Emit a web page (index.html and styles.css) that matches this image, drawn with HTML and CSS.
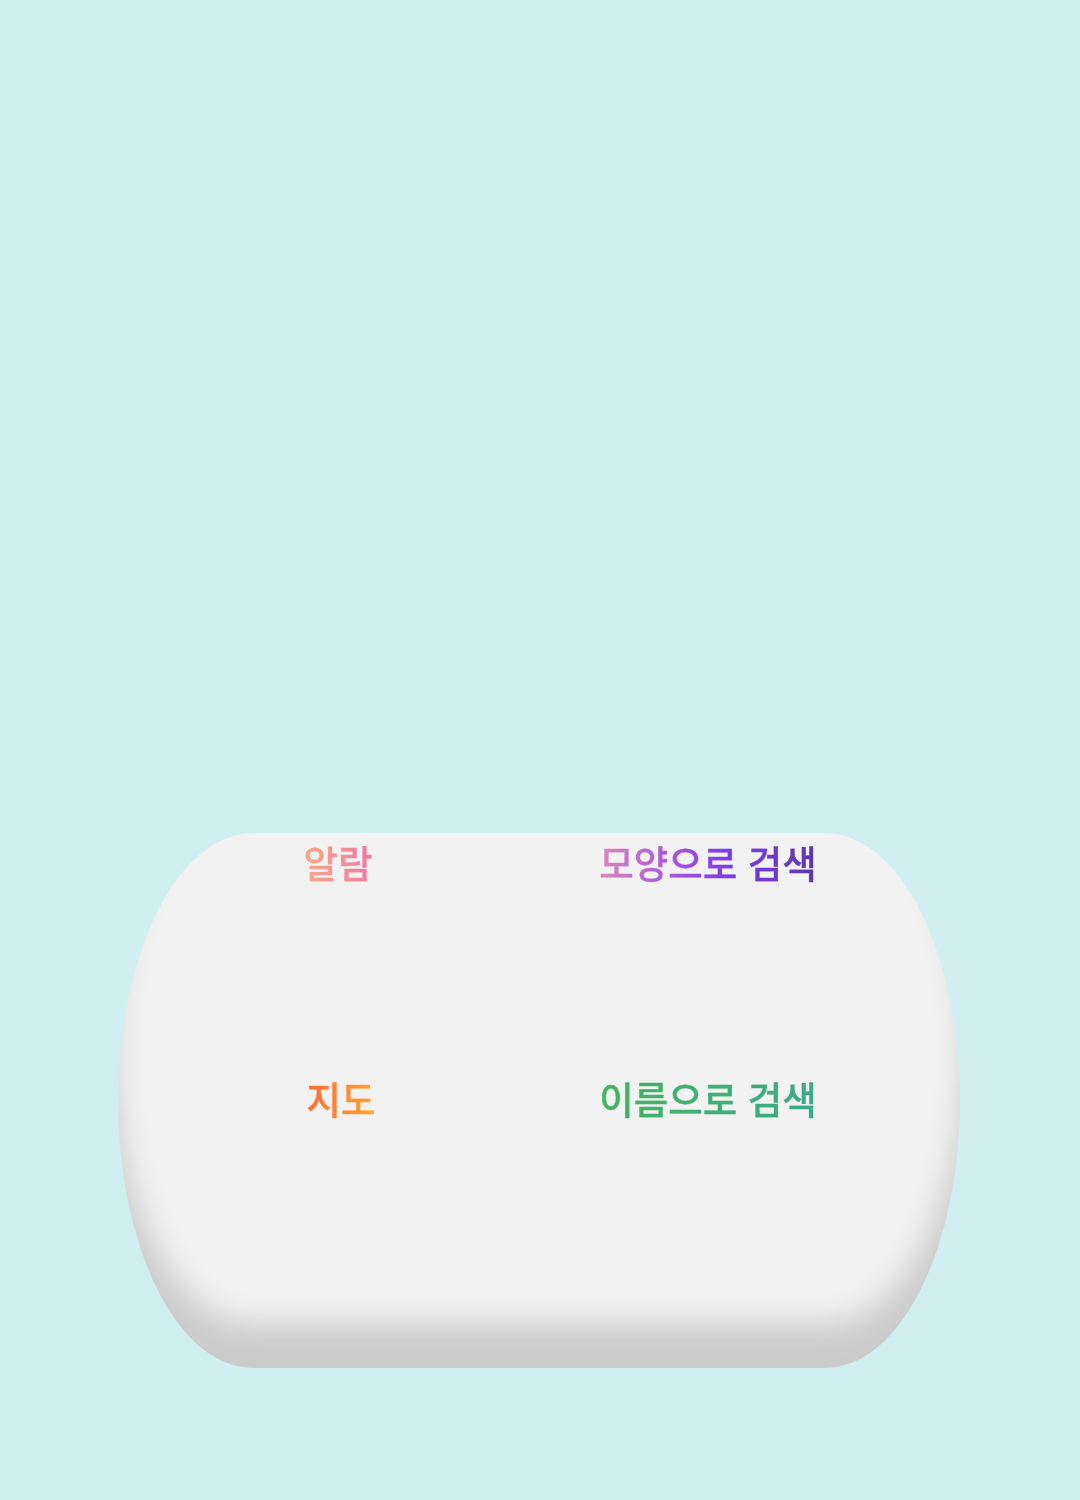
FILE: index.html
```html
<!DOCTYPE html>
<html lang="ko">
<head>
<meta charset="utf-8">
<title>메뉴</title>
<link rel="stylesheet" href="styles.css">
</head>
<body>
<main class="screen">
  <nav class="menu-card">
    <div class="menu-item"><span class="label label-alarm">알람</span></div>
    <div class="menu-item"><span class="label label-shape">모양으로 검색</span></div>
    <div class="menu-item item-map"><span class="label label-map">지도</span></div>
    <div class="menu-item"><span class="label label-name">이름으로 검색</span></div>
  </nav>
</main>
</body>
</html>
```

FILE: styles.css
```css
html, body {
  margin: 0;
  padding: 0;
  background: #d1eef0;
}
.screen {
  width: 1080px;
  height: 1500px;
  display: flex;
  flex-direction: column;
  align-items: flex-start;
  padding-top: 833px;
  padding-left: 118px;
  box-sizing: border-box;
}
.menu-card {
  width: 842px;
  height: 535px;
  box-sizing: border-box;
  background: #f2f2f2;
  border-radius: 16% / 50%;
  box-shadow: inset 0 -48px 30px -4px rgba(0, 0, 0, 0.16);
  display: grid;
  grid-template-columns: 300px 300px;
  grid-template-rows: 236px 236px;
  column-gap: 70px;
  padding-left: 70px;
}
.menu-item {
  display: flex;
  justify-content: center;
  align-items: flex-start;
}
.item-map {
  padding-left: 6px;
}
.label {
  font-family: "Noto Sans CJK KR", "Noto Sans", sans-serif;
  font-size: 37.5px;
  font-weight: 500;
  line-height: 58px;
  white-space: nowrap;
  -webkit-background-clip: text;
  background-clip: text;
  color: transparent;
  -webkit-text-stroke: 0.4px transparent;
}
.label-alarm {
  background-image: linear-gradient(90deg, #f8a988, #ef78a2);
}
.label-shape {
  background-image: linear-gradient(90deg, #d88ab8 0%, #a752e0 35%, #7a3ce8 60%, #5f37a8 100%);
}
.label-map {
  background-image: linear-gradient(90deg, #ff6a3a, #ffa62e);
}
.label-name {
  background-image: linear-gradient(100deg, #45b45e, #3aa98c);
}
```
